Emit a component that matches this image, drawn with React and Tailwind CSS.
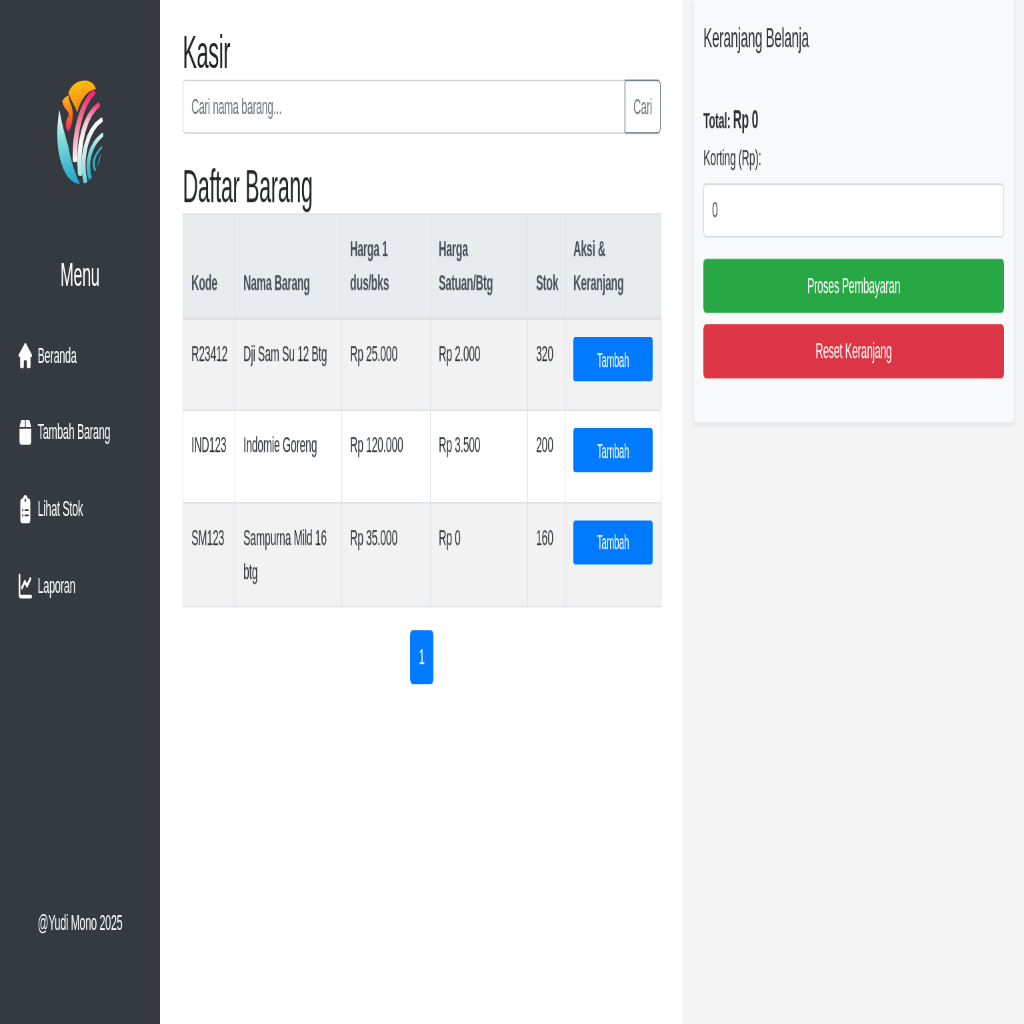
import { FaHouse, FaBox, FaClipboardList, FaChartLine } from 'react-icons/fa6'

const navItems = [
  { label: 'Beranda', Icon: FaHouse },
  { label: 'Tambah Barang', Icon: FaBox },
  { label: 'Lihat Stok', Icon: FaClipboardList },
  { label: 'Laporan', Icon: FaChartLine },
]

const barang = [
  { kode: 'R23412', nama: 'Dji Sam Su 12 Btg', dus: 'Rp 25.000', satuan: 'Rp 2.000', stok: 320 },
  { kode: 'IND123', nama: 'Indomie Goreng', dus: 'Rp 120.000', satuan: 'Rp 3.500', stok: 200 },
  { kode: 'SM123', nama: 'Sampurna Mild 16 btg', dus: 'Rp 35.000', satuan: 'Rp 0', stok: 160 },
]

const Logo = () => (
  <svg className="w-[70px] h-[74px] mx-auto" viewBox="170 60 140 315" preserveAspectRatio="none">
    <defs>
      <clipPath id="logoClip"><ellipse cx="240" cy="217" rx="70" ry="157" /></clipPath>
      <linearGradient id="lgTeal" gradientUnits="userSpaceOnUse" x1="180" y1="150" x2="230" y2="370">
        <stop offset="0" stopColor="#ffffff" />
        <stop offset="0.4" stopColor="#7fdcd8" />
        <stop offset="1" stopColor="#1fa3cc" />
      </linearGradient>
      <linearGradient id="lgOrange" gradientUnits="userSpaceOnUse" x1="195" y1="110" x2="205" y2="215">
        <stop offset="0" stopColor="#fdb813" />
        <stop offset="0.55" stopColor="#ff6a20" />
        <stop offset="1" stopColor="#ee2a6b" />
      </linearGradient>
      <linearGradient id="lgTop" gradientUnits="userSpaceOnUse" x1="225" y1="65" x2="255" y2="155">
        <stop offset="0" stopColor="#ffc20e" />
        <stop offset="1" stopColor="#fb7a1c" />
      </linearGradient>
      <linearGradient id="lgPink" gradientUnits="userSpaceOnUse" x1="280" y1="95" x2="222" y2="300">
        <stop offset="0" stopColor="#ff1f6b" />
        <stop offset="0.4" stopColor="#f56d90" />
        <stop offset="1" stopColor="#f4f4f4" />
      </linearGradient>
      <linearGradient id="lgPink2" gradientUnits="userSpaceOnUse" x1="298" y1="130" x2="240" y2="345">
        <stop offset="0" stopColor="#f5306f" />
        <stop offset="0.3" stopColor="#f7c6d0" />
        <stop offset="0.6" stopColor="#ffffff" />
        <stop offset="1" stopColor="#9be3df" />
      </linearGradient>
      <linearGradient id="lgWhite" gradientUnits="userSpaceOnUse" x1="305" y1="180" x2="256" y2="365">
        <stop offset="0" stopColor="#ffffff" />
        <stop offset="0.6" stopColor="#d9e6e6" />
        <stop offset="1" stopColor="#6fd3d6" />
      </linearGradient>
      <linearGradient id="lgBlue" gradientUnits="userSpaceOnUse" x1="308" y1="225" x2="272" y2="360">
        <stop offset="0" stopColor="#d7f2ef" />
        <stop offset="0.5" stopColor="#5fcfd2" />
        <stop offset="1" stopColor="#2aa5cc" />
      </linearGradient>
    </defs>
    <path d="M205 100C213 74 238 60 262 63C276 66 285 76 288 88C262 92 242 118 232 158C225 140 212 120 205 100Z" fill="url(#lgTop)" />
    <g clipPath="url(#logoClip)" fill="none" strokeLinecap="round">
      <path d="M178 150C170 200 165 280 195 340C205 360 225 372 240 372C225 340 212 300 205 260C195 225 185 190 178 150Z" fill="url(#lgTeal)" />
      <path d="M187 125C190 115 200 108 206 108C205 125 220 140 218 165C218 190 212 210 205 215C195 205 195 185 205 170C212 155 190 150 187 125Z" fill="url(#lgOrange)" />
      <path d="M225 300C223 220 243 135 281 98" stroke="url(#lgPink)" strokeWidth="14" />
      <path d="M240 342C232 250 255 165 299 133" stroke="url(#lgPink2)" strokeWidth="13" />
      <path d="M256 365C240 290 262 210 305 180" stroke="url(#lgWhite)" strokeWidth="12" />
      <path d="M272 360C255 310 270 255 308 225" stroke="url(#lgBlue)" strokeWidth="11" />
      <path d="M285 330C276 310 283 285 306 262" stroke="#2fb4c9" strokeWidth="6" />
      <path d="M294 320C296 305 300 295 304 285" stroke="#35b7c4" strokeWidth="4" />
    </g>
  </svg>
)

const Sidebar = () => (
  <aside className="w-[240px] shrink-0 bg-[#343a40] text-white flex flex-col pt-[56px]">
    <Logo />
    <h4 className="mt-[48px] text-center text-[24px] leading-[29px]">Menu</h4>
    <nav className="mt-[16px] flex flex-col pl-[28px]">
      {navItems.map(({ label, Icon }) => (
        <a key={label} href="#" className="flex items-center gap-[8.5px] h-[54px] text-base">
          <Icon className="h-[20px] w-auto shrink-0" />
          {label}
        </a>
      ))}
    </nav>
    <p className="mt-auto mb-[59px] text-center text-base leading-6">@Yudi Mono 2025</p>
  </aside>
)

const thClass = 'pt-3 px-3 pb-[12.5px] align-bottom text-left font-bold text-[#495057] border border-[#dee2e6] border-b-2'
const tdClass = 'p-3 align-top border border-[#dee2e6]'

const Tabel = () => (
  <table className="w-[717px] table-fixed text-base leading-6 text-[#2b3035]">
    <thead className="bg-[#e9ecef]">
      <tr>
        <th className={`${thClass} w-[78px]`}>Kode</th>
        <th className={`${thClass} w-[160px]`}>Nama Barang</th>
        <th className={`${thClass} w-[133px]`}>Harga 1 dus/bks</th>
        <th className={`${thClass} w-[146px]`}>Harga Satuan/Btg</th>
        <th className={`${thClass} w-[56px]`}>Stok</th>
        <th className={`${thClass} w-[144px]`}>Aksi & Keranjang</th>
      </tr>
    </thead>
    <tbody>
      {barang.map((b, i) => (
        <tr key={b.kode} className={i % 2 === 0 ? 'bg-[#f2f2f2] h-[64.5px]' : 'bg-white h-[64.5px]'}>
          <td className={tdClass}>{b.kode}</td>
          <td className={tdClass}>{b.nama}</td>
          <td className={tdClass}>{b.dus}</td>
          <td className={tdClass}>{b.satuan}</td>
          <td className={tdClass}>{b.stok}</td>
          <td className={tdClass}>
            <button type="button" className="block w-full h-[31px] bg-[#007bff] text-white text-sm rounded-[3px]">
              Tambah
            </button>
          </td>
        </tr>
      ))}
    </tbody>
  </table>
)

const Keranjang = () => (
  <div className="ml-[15px] mr-[14px] bg-[#f8f9fa] border border-t-0 border-[#e4e6e8] rounded-b-[4px] shadow-[0_1px_2px_rgba(0,0,0,0.05)] px-[15px] pt-[14px] pb-[31px] text-[#2b3035]">
    <h5 className="text-[20px] leading-6">Keranjang Belanja</h5>
    <p className="mt-[34px] leading-6 font-bold">
      Total: <span className="text-[18px]">Rp 0</span>
    </p>
    <label className="block mt-[2px] leading-6">Korting (Rp):</label>
    <input
      type="number"
      defaultValue="0"
      className="block w-full h-[38px] mt-[5.5px] px-3 bg-white border border-[#ced4da] rounded-[4px] text-[#495057] outline-none"
    />
    <button type="button" className="block w-full h-[38px] mt-[15px] bg-[#28a745] text-white rounded-[4px]">
      Proses Pembayaran
    </button>
    <button type="button" className="block w-full h-[38px] mt-[8px] bg-[#dc3545] text-white rounded-[4px]">
      Reset Keranjang
    </button>
  </div>
)

const App = () => {
  return (
    <div className="w-[1024px] h-[1024px] overflow-hidden">
      {/* the shot is a 1536x720 page squeezed into a square */}
      <div className="w-[1536px] h-[720px] flex origin-top-left scale-x-[0.66667] scale-y-[1.42222] will-change-transform tracking-[-0.02em] font-['Liberation_Sans',Arial,sans-serif] bg-white">
        <Sidebar />
        <main className="w-[784px] shrink-0 pl-[34px] pt-[18px]">
          <h2 className="text-[32px] leading-[38px] text-[#212529]">Kasir</h2>
          <div className="flex w-[717px] h-[38px]">
            <input
              type="text"
              placeholder="Cari nama barang..."
              className="flex-1 min-w-0 px-3 border border-[#ced4da] rounded-l-[4px] outline-none placeholder:text-[#6c757d]"
            />
            <button type="button" className="w-[54px] border border-[#6c757d] rounded-r-[4px] text-[#6c757d]">
              Cari
            </button>
          </div>
          <h2 className="mt-[17.5px] text-[32px] leading-[38px] text-[#212529]">Daftar Barang</h2>
          <Tabel />
          <div className="w-[717px] mt-[16px] flex justify-center">
            <a href="#" className="w-[35px] h-[38px] flex items-center justify-center bg-[#007bff] text-white rounded-[4px]">
              1
            </a>
          </div>
        </main>
        <section className="flex-1 bg-[#f4f4f4]">
          <Keranjang />
        </section>
      </div>
    </div>
  )
}

export default App
